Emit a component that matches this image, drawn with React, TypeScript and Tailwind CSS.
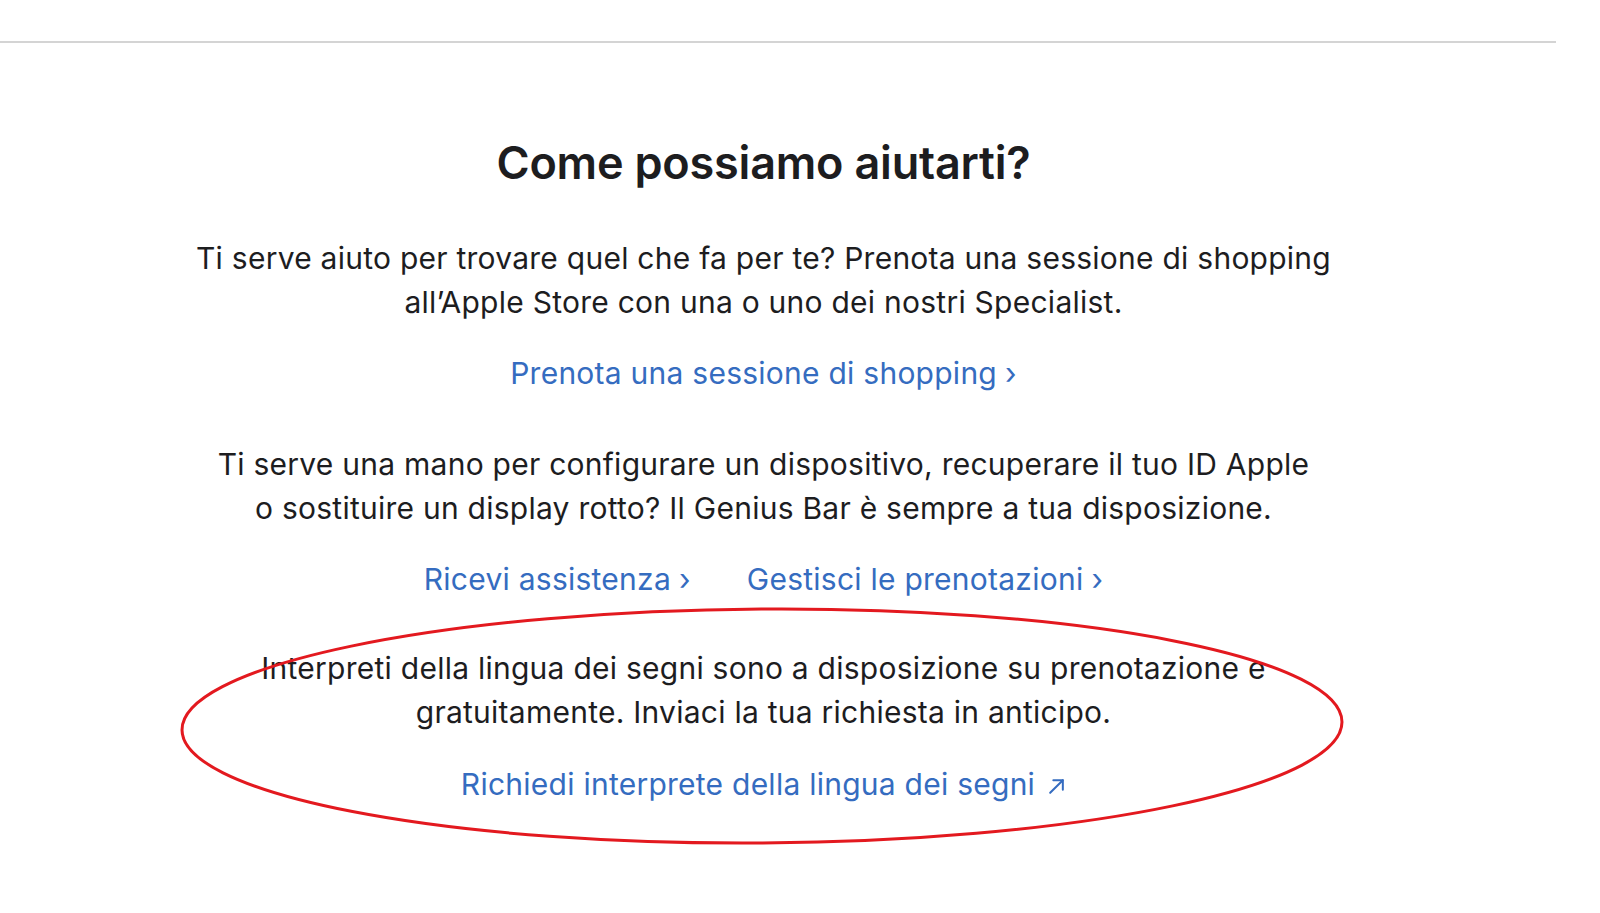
import React from "react";

const Chevron = () => <span className="ml-[8px]">›</span>;

export default function App() {
  return (
    <div
      className="relative w-[1600px] h-[913px] bg-white overflow-hidden text-[#1d1d1f]"
      style={{ fontFamily: "Inter, 'Noto Sans', sans-serif" }}
    >
      <div className="w-[1556px] h-[2px] mt-[41px] bg-[#d4d4d4]" />
      <div className="w-[1527px] flex flex-col items-center text-center">
        <h1 className="mt-[96px] text-[45px] leading-[48px] font-semibold tracking-[-0.2px]">
          Come possiamo aiutarti?
        </h1>
        <p className="mt-[49px] text-[30px] leading-[44px] tracking-[0.25px]">
          Ti serve aiuto per trovare quel che fa per te? Prenota una sessione di shopping
          <br />
          all’Apple Store con una o uno dei nostri Specialist.
        </p>
        <a className="mt-[27px] text-[30px] leading-[44px] tracking-[0.25px] text-[#356cc0]">
          Prenota una sessione di shopping<Chevron />
        </a>
        <p className="mt-[47px] text-[30px] leading-[44px] tracking-[0.25px]">
          Ti serve una mano per configurare un dispositivo, recuperare il tuo ID Apple
          <br />
          o sostituire un display rotto? Il Genius Bar è sempre a tua disposizione.
        </p>
        <div className="mt-[27px] flex gap-[56px] text-[30px] leading-[44px] tracking-[0.25px] text-[#356cc0]">
          <a>
            Ricevi assistenza<Chevron />
          </a>
          <a>
            Gestisci le prenotazioni<Chevron />
          </a>
        </div>
        <p className="mt-[45px] text-[30px] leading-[44px] tracking-[0.25px]">
          Interpreti della lingua dei segni sono a disposizione su prenotazione e
          <br />
          gratuitamente. Inviaci la tua richiesta in anticipo.
        </p>
        <a className="mt-[28px] text-[30px] leading-[44px] tracking-[0.25px] text-[#356cc0] flex items-center">
          Richiedi interprete della lingua dei segni
          <svg className="ml-[12px] mt-[4px]" width="19" height="19" viewBox="0 0 18 18" fill="none" stroke="#356cc0" strokeWidth="1.9" strokeLinecap="round" strokeLinejoin="round">
            <path d="M3 15 L15 3" />
            <path d="M6 3 H15 V12" />
          </svg>
        </a>
      </div>
      <svg className="absolute left-0 top-0 pointer-events-none" width="1600" height="913" viewBox="0 0 1600 913">
        <ellipse cx="762" cy="726" rx="580" ry="117" fill="none" stroke="#e3191f" strokeWidth="3" transform="rotate(-0.4 762 726)" />
      </svg>
    </div>
  );
}
